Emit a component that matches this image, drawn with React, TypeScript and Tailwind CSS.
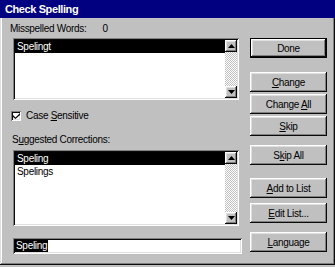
import type { ReactNode } from 'react';

const raised =
  'shadow-[inset_-1px_-1px_#0a0a0a,inset_1px_1px_#ffffff,inset_-2px_-2px_#808080,inset_2px_2px_#dfdfdf]';
const sunken =
  'shadow-[inset_1px_1px_#808080,inset_-1px_-1px_#ffffff,inset_2px_2px_#0a0a0a,inset_-2px_-2px_#dfdfdf]';

function Btn({ children, mt, isDefault }: { children: ReactNode; mt: string; isDefault?: boolean }) {
  if (isDefault) {
    return (
      <div className={`${mt} h-[20px] w-[77px] border border-black`}>
        <div className={`h-full w-full bg-[#c0c0c0] ${raised} flex items-center justify-center`}>
          <span>{children}</span>
        </div>
      </div>
    );
  }
  return (
    <div className={`${mt} h-[20px] w-[77px] bg-[#c0c0c0] ${raised} flex items-center justify-center`}>
      <span>{children}</span>
    </div>
  );
}

function Arrow({ up }: { up?: boolean }) {
  return (
    <div className={`h-[12px] w-[12px] bg-[#c0c0c0] ${raised} flex items-center justify-center`}>
      <svg width="7" height="4" viewBox="0 0 7 4">
        {up ? <path d="M3.5 0 L7 4 L0 4 Z" fill="#000" /> : <path d="M0 0 L7 0 L3.5 4 Z" fill="#000" />}
      </svg>
    </div>
  );
}

function ScrollBar() {
  return (
    <div className="flex w-[12px] flex-col">
      <Arrow up />
      <div className="flex-1 bg-[repeating-conic-gradient(#c0c0c0_0%_25%,#ffffff_0%_50%)] bg-[length:2px_2px]" />
      <Arrow />
    </div>
  );
}

function ListBox({ h, items }: { h: string; items: string[] }) {
  return (
    <div className={`${h} ml-[3px] w-[226px] bg-white ${sunken} p-[2px] flex`}>
      <div className="flex flex-1 flex-col">
        {items.map((it, i) => (
          <div
            key={it}
            className={`h-[13px] pl-[2px] leading-[13px] ${i === 0 ? 'bg-black text-white' : 'text-black'}`}
          >
            {it}
          </div>
        ))}
      </div>
      <ScrollBar />
    </div>
  );
}

export default function App() {
  return (
    <div className="h-[267px] w-[335px] overflow-hidden bg-[#c0c0c0] font-['Liberation_Sans',Arial,sans-serif] text-[10px] tracking-[-0.3px] text-black">
      <div className="flex h-[18px] items-center bg-[#000080] pl-[5px] text-[11px] font-bold tracking-[-0.4px] text-white">
        Check Spelling
      </div>
      <div className="flex h-[247px] shadow-[inset_-1px_-1px_#0a0a0a,inset_1px_0_#dfdfdf,inset_-2px_-2px_#808080,inset_2px_0_#ffffff] pl-[10px]">
        <div className="flex w-[232px] flex-col">
          <div className="mt-[5px] flex h-[12px] items-center leading-[12px]">
            <span>Misspelled Words:</span>
            <span className="ml-[16px]">0</span>
          </div>
          <ListBox h="mt-[3px] h-[62px]" items={['Spelingt']} />
          <div className="mt-[10px] flex h-[12px] items-center leading-[12px]">
            <div className={`ml-[1px] h-[10px] w-[10px] bg-white ${sunken} flex items-center justify-center`}>
              <svg width="7" height="6" viewBox="0 0 7 6">
                <path d="M0 2 L2.5 4.5 L7 0 L7 2 L2.5 6 L0 4 Z" fill="#000" />
              </svg>
            </div>
            <span className="ml-[5px]">
              Case <span className="underline">S</span>ensitive
            </span>
          </div>
          <div className="mt-[12px] ml-[2px] h-[12px] leading-[12px]">
            S<span className="underline">u</span>ggested Corrections:
          </div>
          <ListBox h="mt-[4px] h-[76px]" items={['Speling', 'Spelings']} />
          <div className={`mt-[12px] ml-[3px] h-[16px] w-[229px] bg-white ${sunken} flex items-center pl-[2px]`}>
            <span className="bg-black px-[1px] leading-[12px] text-white">Speling</span>
          </div>
        </div>
        <div className="ml-[8px] flex flex-col">
          <Btn mt="mt-[20px]" isDefault>
            Done
          </Btn>
          <Btn mt="mt-[14px]">
            <span className="underline">C</span>hange
          </Btn>
          <Btn mt="mt-[2px]">
            Change <span className="underline">A</span>ll
          </Btn>
          <Btn mt="mt-[2px]">
            <span className="underline">S</span>kip
          </Btn>
          <Btn mt="mt-[9px]">
            S<span className="underline">k</span>ip All
          </Btn>
          <Btn mt="mt-[13px]">
            <span className="underline">A</span>dd to List
          </Btn>
          <Btn mt="mt-[5px]">
            <span className="underline">E</span>dit List...
          </Btn>
          <Btn mt="mt-[9px]">
            <span className="underline">L</span>anguage
          </Btn>
        </div>
      </div>
    </div>
  );
}
